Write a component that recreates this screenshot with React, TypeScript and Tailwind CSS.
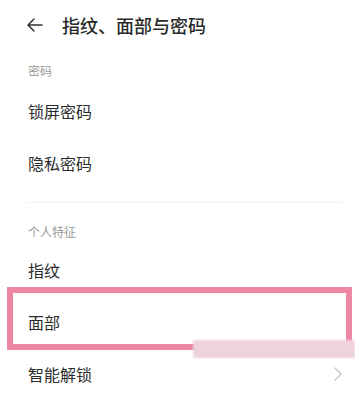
const font = { fontFamily: '"Noto Sans CJK SC", "Noto Sans", sans-serif' };

function Row({ label, chevron }: { label: string; chevron?: boolean }) {
  return (
    <div className="h-[52px] flex items-center justify-between pl-[28px] pr-[12px]">
      <span className="text-[16px] leading-none text-[#2b2b2b]">{label}</span>
      {chevron && (
        <svg width="10" height="16" viewBox="0 0 10 16" fill="none">
          <path d="M2 2l6 6-6 6" stroke="#c4c4c4" strokeWidth="1.4" strokeLinecap="round" strokeLinejoin="round" />
        </svg>
      )}
    </div>
  );
}

function SectionLabel({ text, top }: { text: string; top: string }) {
  return (
    <div className={`pl-[28px] pb-[8px] ${top}`}>
      <span className="block text-[12px] leading-[12px] text-[#9a9a9a]">{text}</span>
    </div>
  );
}

export default function App() {
  return (
    <div className="w-[355px] h-[397px] bg-white overflow-hidden relative" style={font}>
      <div className="h-[50px] flex items-center pl-[27px]">
        <svg width="16" height="14" viewBox="0 0 16 14" fill="none">
          <path d="M15 7H1.5M7 1L1 7l6 6" stroke="#333" strokeWidth="1.5" strokeLinecap="round" strokeLinejoin="round" />
        </svg>
        <span className="ml-[19px] text-[18px] leading-none font-medium text-[#2a2a2a]">指纹、面部与密码</span>
      </div>

      <SectionLabel text="密码" top="pt-[15px]" />
      <Row label="锁屏密码" />
      <Row label="隐私密码" />

      <div className="mt-[13px] mx-[27px] mr-[13px] h-px bg-[#f0f0f0]" />

      <div className="pl-[28px] pt-[23px] pb-[6px]">
        <span className="block text-[12px] leading-[12px] text-[#9a9a9a]">个人特征</span>
      </div>
      <Row label="指纹" />
      <div className="relative">
        <Row label="面部" />
        <div className="absolute left-[7px] right-[3px] top-[-9px] bottom-[-2px] border-[6px] border-[#ee87a3]" />
        <div className="absolute left-[192px] w-[152px] top-[26px] h-[20px] bg-white/90 blur-[1px]" />
        <div className="absolute left-[193px] right-0 top-[44px] h-[18px] bg-[#efd3dc] blur-[1px]" />
      </div>
      <Row label="智能解锁" chevron />
    </div>
  );
}
